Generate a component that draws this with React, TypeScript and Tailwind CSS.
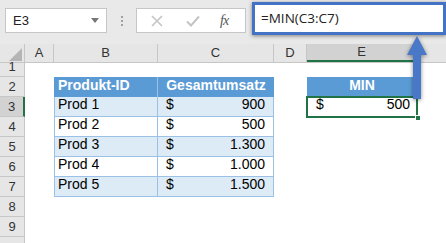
import React from "react";

const cols = ["A", "B", "C", "D", "E", ""];
const colW = ["w-[29px]", "w-[104px]", "w-[116px]", "w-[33px]", "w-[110px]", "flex-1"];

const rows = [
  { n: "1", h: "h-[14px]" },
  { n: "2", h: "h-[20px]" },
  { n: "3", h: "h-[20px]" },
  { n: "4", h: "h-[20px]" },
  { n: "5", h: "h-[20px]" },
  { n: "6", h: "h-[20px]" },
  { n: "7", h: "h-[20px]" },
  { n: "8", h: "h-[20px]" },
  { n: "9", h: "h-[20px]" },
  { n: "", h: "h-[20px]" },
];

const data = [
  { id: "Prod 1", val: "900" },
  { id: "Prod 2", val: "500" },
  { id: "Prod 3", val: "1.300" },
  { id: "Prod 4", val: "1.000" },
  { id: "Prod 5", val: "1.500" },
];

function TableCells({ row }: { row: number }) {
  if (row === 2) {
    return (
      <>
        <div className="w-[104px] bg-[#5b9bd5] border-r border-[#9bc2e6] text-white font-bold text-[14px] pl-[4px] flex items-end pb-[1px]">
          Produkt-ID
        </div>
        <div className="w-[116px] bg-[#5b9bd5] text-white font-bold text-[14px] flex items-end justify-center pb-[1px]">
          Gesamtumsatz
        </div>
      </>
    );
  }
  const d = data[row - 3];
  if (!d) {
    return (
      <>
        <div className="w-[104px]" />
        <div className="w-[116px]" />
      </>
    );
  }
  const bg = row % 2 === 1 ? "bg-[#ddebf7]" : "bg-white";
  return (
    <>
      <div className={`w-[104px] ${bg} border-l border-r border-b border-[#9bc2e6] text-[14px] pl-[3px] flex items-end pb-[1px]`}>
        {d.id}
      </div>
      <div className={`w-[116px] ${bg} border-r border-b border-[#9bc2e6] text-[14px] pl-[8px] pr-[8px] flex items-end justify-between pb-[1px]`}>
        <span>$</span>
        <span>{d.val}</span>
      </div>
    </>
  );
}

function ECell({ row }: { row: number }) {
  if (row === 2) {
    return (
      <div className="w-[110px] bg-[#5b9bd5] text-white font-bold text-[14px] flex items-end justify-center pb-[1px]">
        MIN
      </div>
    );
  }
  if (row === 3) {
    return (
      <div className="w-[110px] relative">
        <div className="absolute left-[-1px] top-[-1px] w-[112px] h-[22px] border-2 border-[#217346] text-[14px] pl-[8px] pr-[6px] flex items-end justify-between pb-[1px]">
          <span>$</span>
          <span>500</span>
        </div>
        <div className="absolute right-[-4px] bottom-[-4px] w-[6px] h-[6px] bg-[#217346] border border-white" />
      </div>
    );
  }
  return <div className="w-[110px]" />;
}

export default function App() {
  return (
    <div className="w-[446px] h-[243px] overflow-hidden relative bg-white text-[#000] font-['Liberation_Sans',Arial,sans-serif]">
      {/* formula bar */}
      <div className="h-[44px] bg-[#e9e9e9] flex items-start">
        <div className="ml-[5px] mt-[8px] w-[102px] h-[25px] bg-white border border-[#c6c6c6] flex items-center justify-between pl-[7px] pr-[7px] text-[13px] text-[#222]">
          <span>E3</span>
          <svg width="8" height="5" viewBox="0 0 8 5">
            <path d="M0 0 L8 0 L4 5 Z" fill="#777" />
          </svg>
        </div>
        <div className="ml-[14px] mt-[16px] flex flex-col gap-[2px]">
          <div className="w-[2px] h-[2px] bg-[#a0a0a0]" />
          <div className="w-[2px] h-[2px] bg-[#a0a0a0]" />
          <div className="w-[2px] h-[2px] bg-[#a0a0a0]" />
        </div>
        <div className="ml-[13px] mt-[8px] w-[110px] h-[25px] bg-white border border-[#c6c6c6] flex items-center">
          <svg className="ml-[14px]" width="12" height="12" viewBox="0 0 12 12">
            <path d="M1 1 L11 11 M11 1 L1 11" stroke="#c4c4c4" strokeWidth="1.6" />
          </svg>
          <svg className="ml-[23px]" width="14" height="12" viewBox="0 0 14 12">
            <path d="M1 6.5 L5 10.5 L13 1.5" stroke="#c4c4c4" strokeWidth="2" fill="none" />
          </svg>
          <span className="ml-[20px] text-[14px] italic text-[#555] font-['Liberation_Serif',serif] tracking-[-1px]">
            fx
          </span>
        </div>
        <div className="ml-[6px] mt-[2px] w-[194px] h-[33px] bg-white border-[3.5px] border-[#4472c4] shadow-[0_1px_4px_rgba(0,0,0,0.45)] flex items-center pl-[6px] text-[13.5px] text-[#222] font-['Open_Sans',sans-serif]">
          =MIN(C3:C7)
        </div>
      </div>

      {/* column headers */}
      <div className="flex h-[19px] bg-[#e6e6e6] border-b border-[#c6c6c6] text-[13px] text-[#333]">
        <div className="w-[25px] border-r border-[#c6c6c6] relative">
          <svg className="absolute right-[2px] bottom-[1px]" width="13" height="13" viewBox="0 0 13 13">
            <path d="M13 0 L13 13 L0 13 Z" fill="#b5b5b5" />
          </svg>
        </div>
        {cols.map((c, i) =>
          c === "E" ? (
            <div key={i} className={`${colW[i]} bg-[#d2d2d2] border-r border-[#c6c6c6] border-b-2 border-b-[#217346] flex items-center justify-center text-[#217346]`}>
              <span className="text-[#333]">{c}</span>
            </div>
          ) : (
            <div key={i} className={`${colW[i]} ${c ? "border-r border-[#c6c6c6]" : ""} flex items-center justify-center`}>
              {c}
            </div>
          )
        )}
      </div>

      {/* grid rows */}
      {rows.map((r, idx) => {
        const rowNum = idx + 1;
        return (
          <div key={rowNum} className={`flex ${r.h}`}>
            <div
              className={`w-[25px] shrink-0 border-b border-[#c6c6c6] flex items-end justify-center text-[13px] text-[#333] ${
                rowNum === 3 ? "bg-[#d2d2d2] border-r-2 border-r-[#217346]" : "bg-[#e6e6e6] border-r border-r-[#c6c6c6]"
              }`}
            >
              {r.n}
            </div>
            <div className="w-[29px]" />
            <TableCells row={rowNum} />
            <div className="w-[33px]" />
            <ECell row={rowNum} />
            <div className="flex-1" />
          </div>
        );
      })}

      {/* arrow pointing to formula */}
      <svg className="absolute left-[403px] top-[33px] drop-shadow-[0_1px_2px_rgba(0,0,0,0.45)]" width="28" height="70" viewBox="0 0 28 70">
        <path d="M14 3 L24 22 L18 22 L18 66 L10 66 L10 22 L4 22 Z" fill="#4a78c8" />
      </svg>
    </div>
  );
}
